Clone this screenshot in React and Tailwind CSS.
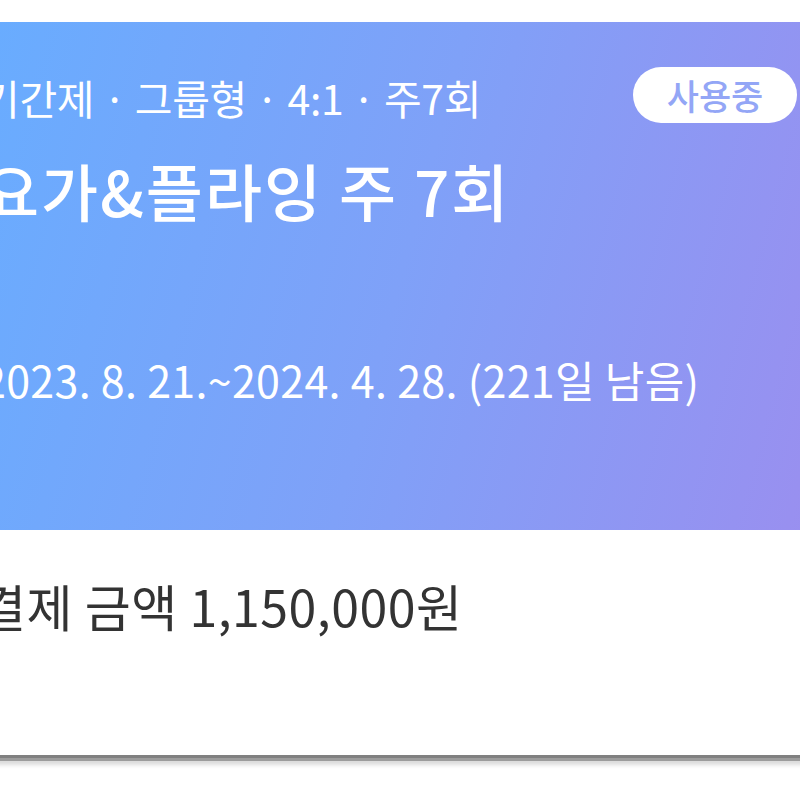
export default function App() {
  return (
    <div
      className="w-[800px] h-[800px] overflow-hidden bg-white pt-[22px]"
      style={{ fontFamily: '"Noto Sans CJK KR", "Noto Sans", sans-serif' }}
    >
      <div className="-ml-[40px] w-[880px] shadow-[0_3px_0_#808080,0_6px_0_#9c9c9c,0_10px_4px_#dcdcdc]">
        <div className="h-[508px] bg-[linear-gradient(105deg,#67adff_0%,#7fa1f8_50%,#9b8eef_100%)] pl-[22px] pr-[43px] pt-[45px] text-white">
          <div className="flex items-center justify-between h-[56px]">
            <div className="text-[41px] leading-[48px] tracking-[-0.3px] whitespace-nowrap mt-[4px]">
              기간제 · 그룹형 · 4:1 · 주7회
            </div>
            <div className="h-[56px] w-[164px] rounded-full bg-white flex items-center justify-center text-[35px] text-[#93a6f6] font-medium">
              사용중
            </div>
          </div>
          <div className="mt-[30px] text-[62px] leading-[75px] tracking-[2px] font-medium whitespace-nowrap">
            요가&amp;플라잉 주 7회
          </div>
          <div className="mt-[124px] text-[43px] leading-[55px] tracking-[0.3px] whitespace-nowrap">
            2023. 8. 21.~2024. 4. 28. (221일 남음)
          </div>
        </div>
        <div className="h-[225px] bg-white pl-[20px] pt-[45px]">
          <div className="text-[50px] leading-[60px] tracking-[0.5px] text-[#333333] whitespace-nowrap">
            결제 금액 1,150,000원
          </div>
        </div>
      </div>
    </div>
  );
}
